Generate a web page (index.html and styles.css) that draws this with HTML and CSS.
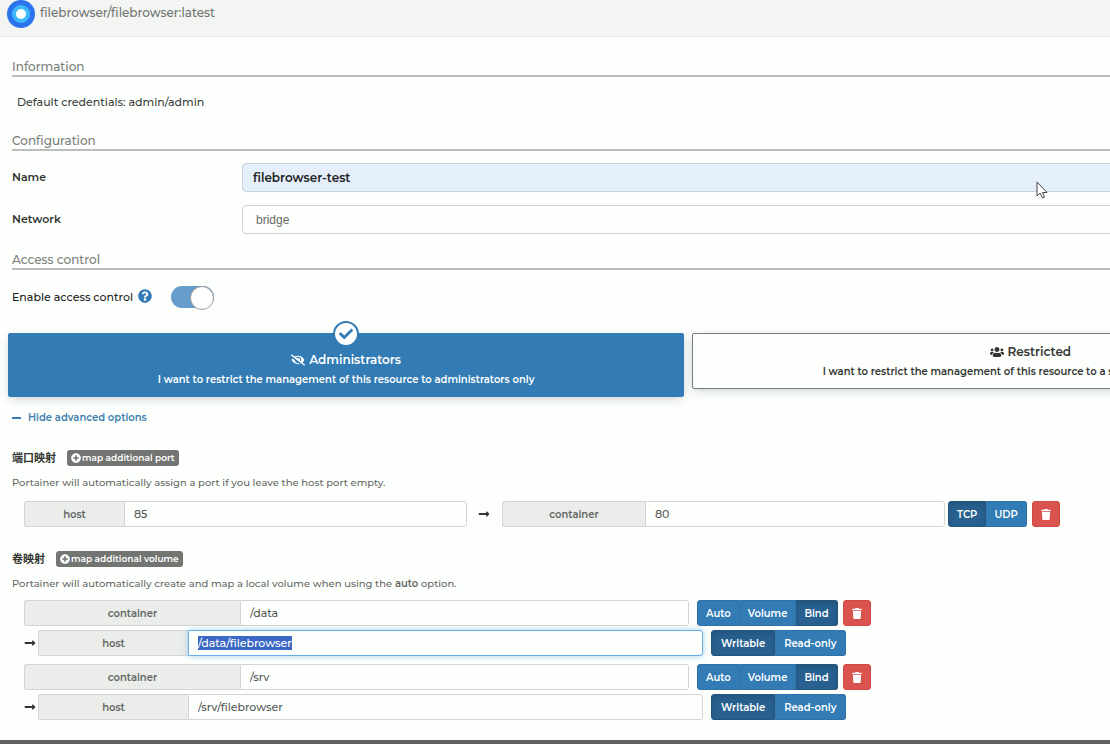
FILE: index.html
```html
<!DOCTYPE html>
<html lang="en">
<head>
<meta charset="utf-8">
<title>filebrowser/filebrowser:latest</title>
<link rel="stylesheet" href="styles.css">
</head>
<body>
<svg class="sprite" aria-hidden="true">
  <symbol id="trash" viewBox="0 0 448 512"><path d="M432 32H312l-9.400-18.700A24 24 0 0 0 281.100 0H166.800a23.720 23.720 0 0 0-21.400 13.300L136 32H16A16 16 0 0 0 0 48v32a16 16 0 0 0 16 16h416a16 16 0 0 0 16-16V48a16 16 0 0 0-16-16zM53.200 467a48 48 0 0 0 47.900 45h245.800a48 48 0 0 0 47.900-45L416 128H32z"/></symbol>
  <symbol id="plus" viewBox="0 0 512 512"><path d="M256 8C119 8 8 119 8 256s111 248 248 248 248-111 248-248S393 8 256 8zm144 276c0 6.600-5.400 12-12 12h-92v92c0 6.600-5.400 12-12 12h-56c-6.600 0-12-5.400-12-12v-92h-92c-6.600 0-12-5.400-12-12v-56c0-6.600 5.400-12 12-12h92v-92c0-6.600 5.400-12 12-12h56c6.600 0 12 5.400 12 12v92h92c6.600 0 12 5.400 12 12v56z"/></symbol>
  <symbol id="arrow" viewBox="0 0 448 512"><path d="M313.941 216H12c-6.627 0-12 5.373-12 12v56c0 6.627 5.373 12 12 12h301.941v46.059c0 21.382 25.851 32.090 40.971 16.971l86.059-86.059c9.373-9.373 9.373-24.569 0-33.941l-86.059-86.059c-15.119-15.119-40.971-4.411-40.971 16.971V216z"/></symbol>
  <symbol id="question" viewBox="0 0 512 512"><path d="M504 256c0 136.997-111.043 248-248 248S8 392.997 8 256C8 119.083 119.043 8 256 8s248 111.083 248 248zM262.655 90c-54.497 0-89.255 22.957-116.549 63.758-3.536 5.286-2.353 12.415 2.715 16.258l34.699 26.310c5.205 3.947 12.621 3.008 16.665-2.122 17.864-22.658 30.113-35.797 57.303-35.797 20.429 0 45.698 13.148 45.698 32.958 0 14.976-12.363 22.667-32.534 33.976C247.128 238.528 216 254.941 216 296v4c0 6.627 5.373 12 12 12h56c6.627 0 12-5.373 12-12v-1.333c0-28.462 83.186-29.647 83.186-106.667 0-58.002-60.165-102-116.531-102zM256 338c-25.365 0-46 20.635-46 46 0 25.364 20.635 46 46 46s46-20.636 46-46c0-25.365-20.635-46-46-46z"/></symbol>
  <symbol id="check" viewBox="0 0 512 512"><path d="M173.898 439.404l-166.400-166.400c-9.997-9.997-9.997-26.206 0-36.204l36.203-36.204c9.997-9.998 26.207-9.998 36.204 0L192 312.690 432.095 72.596c9.997-9.997 26.207-9.997 36.204 0l36.203 36.204c9.997 9.997 9.997 26.206 0 36.204l-294.400 294.401c-9.998 9.997-26.207 9.997-36.204-.001z"/></symbol>
  <symbol id="eye-slash" viewBox="0 0 640 512"><path d="M320 400c-75.850 0-137.250-58.710-142.900-133.110L72.200 185.820c-13.790 17.300-26.480 35.590-36.720 55.590a32.350 32.350 0 0 0 0 29.190C89.710 376.410 197.070 448 320 448c26.910 0 52.870-4 77.890-10.460L346 397.390a144.130 144.130 0 0 1-26 2.610zm313.820 58.100l-110.550-85.440a331.250 331.250 0 0 0 81.250-102.070 32.350 32.350 0 0 0 0-29.190C550.290 135.590 442.930 64 320 64a308.150 308.150 0 0 0-147.320 37.700L45.460 3.370A16 16 0 0 0 23 6.180L3.370 31.450A16 16 0 0 0 6.180 53.900l588.360 454.730a16 16 0 0 0 22.460-2.810l19.640-25.270a16 16 0 0 0-2.820-22.450zm-183.720-142l-39.300-30.380A94.750 94.750 0 0 0 416 256a94.760 94.760 0 0 0-121.310-92.210A47.650 47.650 0 0 1 304 192a46.640 46.640 0 0 1-1.540 10l-73.610-56.890A142.310 142.310 0 0 1 320 112a143.920 143.920 0 0 1 144 144c0 21.630-5.290 41.790-13.900 60.110z"/></symbol>
  <symbol id="users" viewBox="0 0 640 512"><path d="M96 224c35.300 0 64-28.700 64-64s-28.700-64-64-64-64 28.700-64 64 28.700 64 64 64zm448 0c35.300 0 64-28.700 64-64s-28.700-64-64-64-64 28.700-64 64 28.700 64 64 64zm32 32h-64c-17.600 0-33.500 7.100-45.100 18.600 40.300 22.100 68.900 62 75.100 109.400h66c17.700 0 32-14.300 32-32v-32c0-35.300-28.700-64-64-64zm-256 0c61.900 0 112-50.100 112-112S381.900 32 320 32 208 82.100 208 144s50.100 112 112 112zm76.800 32h-8.300c-20.800 10-43.900 16-68.500 16s-47.600-6-68.500-16h-8.300C179.600 288 128 339.600 128 403.200V432c0 26.500 21.500 48 48 48h288c26.500 0 48-21.500 48-48v-28.800c0-63.600-51.600-115.200-115.200-115.200zm-223.700-13.400C161.500 263.100 145.600 256 128 256H64c-35.300 0-64 28.700-64 64v32c0 17.700 14.300 32 32 32h65.900c6.300-47.400 34.900-87.300 75.200-109.400z"/></symbol>
</svg>

<header class="header">
  <svg class="logo" viewBox="0 0 28 28" aria-hidden="true"><circle cx="14" cy="14" r="14" fill="#2b74ee"/><circle cx="14" cy="14" r="9" fill="#3fb9fa"/><circle cx="14" cy="14" r="5" fill="#fff"/></svg>
  <h1 class="title">filebrowser/filebrowser:latest</h1>
</header>

<main class="panel">
  <h2 class="section">Information</h2>
  <p class="note">Default credentials: admin/admin</p>

  <h2 class="section">Configuration</h2>
  <div class="field first">
    <label class="label" for="name">Name</label>
    <input class="control filled" id="name" type="text" value="filebrowser-test">
  </div>
  <div class="field">
    <label class="label" for="network">Network</label>
    <select class="control network" id="network"><option>bridge</option></select>
  </div>

  <h2 class="section access">Access control</h2>
  <div class="toggle-row">
    <label class="label" for="access">Enable access control</label>
    <svg class="icon help"><use href="#question"/></svg>
    <input class="switch" id="access" type="checkbox" checked>
  </div>

  <div class="cards">
    <label class="card selected">
      <input class="radio" type="radio" name="owner" checked>
      <span class="badge"><svg class="icon tick"><use href="#check"/></svg></span>
      <span class="card-title"><svg class="icon wide"><use href="#eye-slash"/></svg>Administrators</span>
      <span class="card-text">I want to restrict the management of this resource to administrators only</span>
    </label>
    <label class="card">
      <input class="radio" type="radio" name="owner">
      <span class="card-title"><svg class="icon wide"><use href="#users"/></svg>Restricted</span>
      <span class="card-text">I want to restrict the management of this resource to a set of users and/or teams</span>
    </label>
  </div>

  <a class="advanced" href="#ports"><span class="minus"></span>Hide advanced options</a>

  <div class="map-head" id="ports">
    <h3 class="map-title">端口映射</h3>
    <button class="add" type="button"><svg class="icon small"><use href="#plus"/></svg>map additional port</button>
  </div>
  <p class="hint">Portainer will automatically assign a port if you leave the host port empty.</p>
  <div class="row ports">
    <div class="group port"><label class="addon a-host" for="p1">host</label><input class="value" id="p1" type="text" value="85"></div>
    <svg class="icon arrow"><use href="#arrow"/></svg>
    <div class="group port"><label class="addon a-cont" for="p2">container</label><input class="value" id="p2" type="text" value="80"></div>
    <div class="buttons"><button class="btn active" type="button">TCP</button><button class="btn" type="button">UDP</button></div>
    <button class="remove" type="button" aria-label="Remove port"><svg class="icon bin"><use href="#trash"/></svg></button>
  </div>

  <div class="map-head">
    <h3 class="map-title">卷映射</h3>
    <button class="add" type="button"><svg class="icon small"><use href="#plus"/></svg>map additional volume</button>
  </div>
  <p class="hint">Portainer will automatically create and map a local volume when using the <b>auto</b> option.</p>

  <div class="volumes">
    <div class="volume">
      <div class="row">
        <div class="group vol"><label class="addon a-volume" for="v1">container</label><input class="value" id="v1" type="text" value="/data"></div>
        <div class="buttons"><button class="btn" type="button">Auto</button><button class="btn" type="button">Volume</button><button class="btn active" type="button">Bind</button></div>
        <button class="remove" type="button" aria-label="Remove volume"><svg class="icon bin"><use href="#trash"/></svg></button>
      </div>
      <div class="row">
        <svg class="icon arrow lead"><use href="#arrow"/></svg>
        <div class="group vol"><label class="addon a-bind" for="h1">host</label><input class="value" id="h1" type="text" value="/data/filebrowser"></div>
        <div class="buttons mode"><button class="btn active" type="button">Writable</button><button class="btn" type="button">Read-only</button></div>
      </div>
    </div>
    <div class="volume">
      <div class="row">
        <div class="group vol"><label class="addon a-volume" for="v2">container</label><input class="value" id="v2" type="text" value="/srv"></div>
        <div class="buttons"><button class="btn" type="button">Auto</button><button class="btn" type="button">Volume</button><button class="btn active" type="button">Bind</button></div>
        <button class="remove" type="button" aria-label="Remove volume"><svg class="icon bin"><use href="#trash"/></svg></button>
      </div>
      <div class="row">
        <svg class="icon arrow lead"><use href="#arrow"/></svg>
        <div class="group vol"><label class="addon a-bind" for="h2">host</label><input class="value" id="h2" type="text" value="/srv/filebrowser"></div>
        <div class="buttons mode"><button class="btn active" type="button">Writable</button><button class="btn" type="button">Read-only</button></div>
      </div>
    </div>
  </div>
</main>
<footer class="strip"></footer>
<svg class="pointer" viewBox="0 0 12 18" aria-hidden="true"><path d="M1 1v14l3-3 2.500 5 2-1-2-4.500H11z" fill="#fff" stroke="#444" stroke-linejoin="round"/></svg>
<script src="script.js"></script>
</body>
</html>
```
FILE: styles.css
```css
* { box-sizing: border-box; }
body {
  margin: 0;
  overflow: hidden;
  background: #fdfffc;
  color: #333633;
  font: 500 11px/16px Montserrat, Inter, "Noto Sans CJK SC", sans-serif;
}
h1, h2, h3, p { margin: 0; font-weight: 500; }
input, select, button { font: inherit; color: inherit; margin: 0; }
button { cursor: pointer; }
.sprite { position: absolute; width: 0; height: 0; }
.icon { flex: none; width: 12px; height: 12px; fill: currentColor; }

.header {
  display: flex;
  align-items: flex-start;
  gap: 5px;
  padding: 0 7px 8px;
  background: #f3f5f2;
  border-bottom: 1px solid #e6e9e5;
}
.logo { width: 28px; height: 28px; }
.title { font-size: 12px; line-height: 26px; color: #707370; }

.panel { width: 124%; padding: 21px 8px 20px; }
.section {
  margin-left: 4px;
  border-bottom: 2px solid #bcbebb;
  font-size: 12px;
  line-height: 17px;
  color: #7a7d7a;
}
.note { padding: 17px 9px 22px; color: #3c3f3c; }
.label { font-weight: 600; }
.field { display: flex; align-items: flex-start; margin-top: 13px; padding-left: 4px; }
.first { margin-top: 12px; }
.field .label { flex: 0 0 230px; line-height: 28px; }
.control {
  flex: 1;
  height: 29px;
  padding: 0 10px;
  background: #fdfffc;
  border: 1px solid #cfd2ce;
  border-radius: 4px;
}
.filled { background: #e5effc; border-color: #c4d2dc; font-size: 12px; font-weight: 600; color: #222; }
.network { appearance: none; padding: 0 13px; font: 12px "Liberation Sans", sans-serif; color: #666966; }
.access { margin-top: 17px; }
.toggle-row { display: flex; align-items: center; margin-top: 16px; padding-left: 4px; }
.toggle-row .label { font-weight: 500; color: #222; }
.help { width: 14px; height: 14px; margin: 0 19px 2px 5px; color: #337ab7; }
.switch {
  appearance: none;
  display: flex;
  justify-content: flex-end;
  width: 43px;
  height: 22px;
  background: #669dcb;
  border-radius: 11px;
}
.switch::before {
  content: "";
  width: 22px;
  height: 22px;
  background: #fff;
  border: 1px solid #999c99;
  border-radius: 50%;
}

.cards { display: flex; align-items: flex-start; gap: 8px; margin-top: 25px; }
.card {
  position: relative;
  flex: 1;
  display: flex;
  flex-direction: column;
  align-items: center;
  gap: 4px;
  padding: 10px 8px 8px;
  border: 1px solid #777a77;
  border-radius: 2px;
  box-shadow: 0 3px 10px -2px rgba(60, 80, 90, .3);
}
.selected { padding: 18px 8px 8px; background: #327bb4; border-color: #327bb4; color: #fff; }
.radio { position: absolute; opacity: 0; }
.badge {
  position: absolute;
  top: -13px;
  left: 50%;
  display: grid;
  place-items: center;
  width: 26px;
  height: 26px;
  margin-left: -13px;
  background: #fff;
  border: 2px solid #327bb4;
  border-radius: 50%;
  color: #327bb4;
}
.tick { width: 14px; height: 14px; }
.card-title { display: flex; align-items: center; gap: 4px; font-size: 12px; font-weight: 600; }
.wide { width: 14px; }
.card-text { font-size: 10px; font-weight: 600; white-space: nowrap; }

.advanced { display: flex; align-items: center; gap: 7px; margin: 13px 4px 0; font-size: 10px; font-weight: 600; color: #417fb2; text-decoration: none; }
.minus { width: 9px; height: 2px; background: #337ab7; }

.map-head { display: flex; align-items: center; gap: 11px; margin: 24px 4px 0; }
.map-title { font-size: 11px; font-weight: 700; }
.add {
  display: flex;
  align-items: center;
  gap: 1px;
  padding: 0 4px;
  border: 0;
  border-radius: 3px;
  background: #727572;
  color: #fff;
  font-size: 9px;
  font-weight: 600;
}
.small { width: 10px; height: 10px; }
.hint { margin: 9px 4px 0; font-size: 10px; color: #666966; }
.hint b { font-weight: 600; }

.row { display: flex; align-items: center; padding-left: 16px; }
.ports { margin-top: 10px; }
.group { display: flex; }
.port { flex: 0 0 443px; }
.vol { flex: 0 0 665px; }
.addon {
  flex: none;
  padding-top: 2px;
  font-size: 10px;
  font-weight: 600;
  line-height: 22px;
  text-align: center;
  background: #ebedea;
  border: 1px solid #d2d5d1;
  border-right: 0;
  border-radius: 3px 0 0 3px;
  color: #646764;
}
.a-host { width: 100px; }
.a-cont { width: 143px; }
.a-volume { width: 216px; }
.a-bind { width: 150px; }
.value {
  flex: 1;
  min-width: 0;
  height: 26px;
  padding: 0 9px;
  background: #fdfffc;
  border: 1px solid #d2d5d1;
  border-radius: 0 3px 3px 0;
  color: #555855;
}
.value:focus { outline: 0; border-color: #66afe9; box-shadow: 0 0 6px rgba(102, 175, 233, .6); }
.value::selection { background: #3a68c4; color: #fff; }
.arrow { margin: 0 12px 0 11px; }
.lead { margin: 0 2px 0 0; }
.buttons { display: flex; margin-left: 8px; }
.ports .buttons { margin-left: 3px; }
.btn {
  height: 26px;
  padding: 2px 8px 0;
  border: 1px solid #2e72a9;
  border-left-width: 0;
  background: #327bb4;
  color: #fff;
  font-size: 10px;
  font-weight: 600;
}
.mode .btn { padding: 2px 9px 0; }
.btn:first-child { border-left-width: 1px; border-radius: 3px 0 0 3px; }
.btn:last-child { border-radius: 0 3px 3px 0; }
.btn.active { background: #286090; border-color: #24557f; box-shadow: inset 0 3px 5px rgba(0, 0, 0, .12); }
.remove {
  display: grid;
  place-items: center;
  width: 28px;
  height: 26px;
  margin-left: 5px;
  padding: 0;
  background: #d9534f;
  border: 1px solid #d34a45;
  border-radius: 3px;
  color: #fff;
}
.bin { width: 10px; height: 11px; }
.volumes { display: grid; gap: 8px; margin-top: 8px; }
.volume { display: grid; gap: 4px; }
.strip { height: 4px; background: #606160; }
.pointer { position: absolute; left: 1036px; top: 181px; width: 12px; height: 18px; }
```
FILE: script.js
```javascript
const field = document.getElementById('h1');
field.focus({ preventScroll: true });
field.select();
```
